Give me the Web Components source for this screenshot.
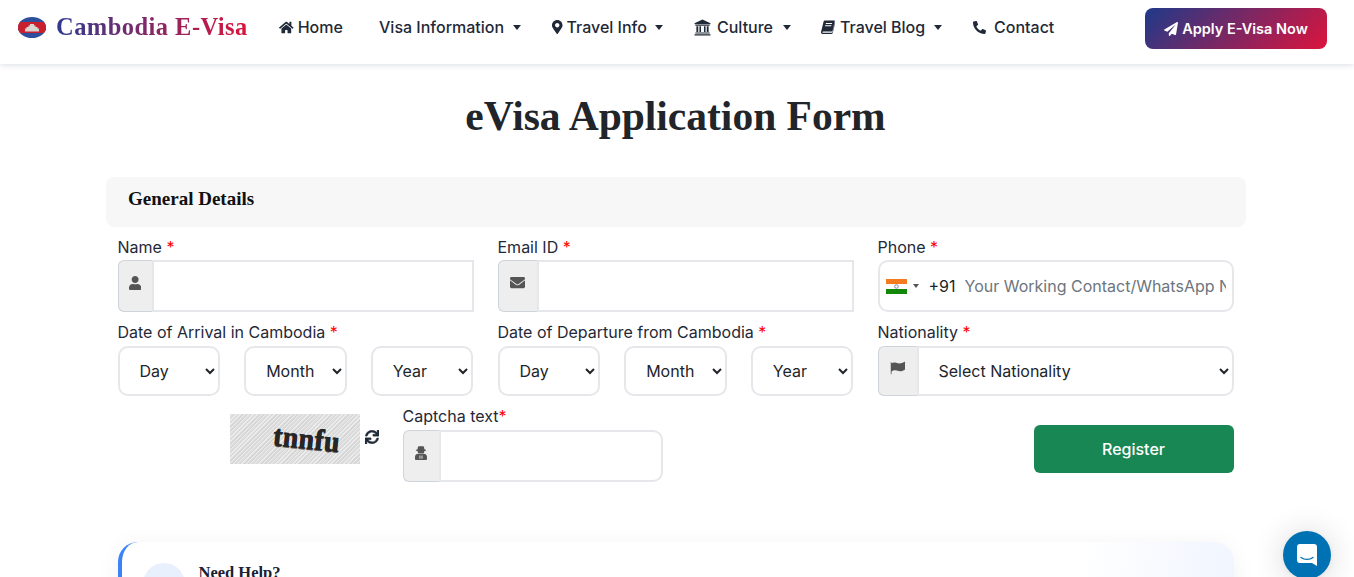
<!DOCTYPE html>
<html lang="en">
<head>
<meta charset="utf-8">
<title>eVisa Application Form</title>
<style>
  html, body { margin: 0; height: 577px; overflow: hidden; background: #fff; }
  body { font-family: Inter, "Liberation Sans", sans-serif; font-size: 16px; color: #212529; }
</style>
</head>
<body>
<site-header></site-header>
<visa-form></visa-form>
<chat-launcher></chat-launcher>

<script>
const ICONS = {
  home: ['0 0 576 512', 'M280.37 148.26L96 300.11V464a16 16 0 0 0 16 16l112.06-.29a16 16 0 0 0 15.92-16V368a16 16 0 0 1 16-16h64a16 16 0 0 1 16 16v95.64a16 16 0 0 0 16 16.05L464 480a16 16 0 0 0 16-16V300L295.67 148.26a12.19 12.19 0 0 0-15.3 0zM571.6 251.47L488 182.56V44.05a12 12 0 0 0-12-12h-56a12 12 0 0 0-12 12v72.61L318.47 43a48 48 0 0 0-61 0L4.34 251.47a12 12 0 0 0-1.6 16.9l25.5 31A12 12 0 0 0 45.15 301l235.22-193.74a12.19 12.19 0 0 1 15.3 0L530.9 301a12 12 0 0 0 16.9-1.6l25.5-31a12 12 0 0 0-1.7-16.93z'],
  pin: ['0 0 384 512', 'M172.268 501.67C26.97 291.031 0 268.413 0 192 0 85.961 85.961 0 192 0s192 85.961 192 192c0 76.413-26.97 99.031-172.268 309.67-9.535 13.774-29.93 13.773-39.464 0zM192 272c44.183 0 80-35.817 80-80s-35.817-80-80-80-80 35.817-80 80 35.817 80 80 80z'],
  bank: ['0 0 512 512', 'M256 16L16 128v32h480v-32zM40 176v24h432v-24zM72 216v176h56V216zM164 216v176h48V216zM300 216v176h48V216zM384 216v176h56V216zM40 408v32h432v-32zM16 456v40h480v-40z'],
  book: ['0 0 512 512', 'M150 16h340c14 0 22 11 18 25l-84 350c-4 14-16 26-32 26H84c-22 0-30 14-32 24-2 14 8 25 26 25h322c12 0 18-8 21-18l82-336c12 6 12 16 9 28l-80 330c-6 24-24 42-50 42H64C26 512-8 478 2 430c1-6 4-14 6-22L92 62c6-26 30-46 58-46zM186 112c-3 0-6 3-7 6l-6 20c-1 3 1 6 4 6h218c3 0 6-3 7-6l6-20c1-3-1-6-4-6zM160 192c-3 0-6 3-7 6l-6 20c-1 3 1 6 4 6h218c3 0 6-3 7-6l6-20c1-3-1-6-4-6z'],
  phone: ['0 0 512 512', 'M18.6 24.6l104-24c11.3-2.6 22.9 3.3 27.5 13.9l48 112c4.2 9.8 1.4 21.3-6.9 28l-60.6 49.6c36 76.7 98.9 140.5 177.2 177.2l49.6-60.6c6.8-8.3 18.2-11.1 28-6.9l112 48c10.7 4.6 16.6 16.2 14 27.5l-24 104C484.9 504.2 475.3 512 464 512 207.9 512 0 304.5 0 48c0-11.2 7.7-20.9 18.6-23.4z'],
  plane: ['0 0 512 512', 'M476 3.2L12.5 270.6c-18.1 10.4-15.8 35.6 2.2 43.2L121 358.4l287.3-253.2c5.5-4.9 13.3 2.6 8.6 8.3L176 407v80.5c0 23.6 28.5 32.9 42.5 15.8L282 426l124.6 52.2c14.2 6 30.4-2.9 33-18.2l72-432C515 7.8 493.3-6.8 476 3.2z'],
  user: ['0 0 448 512', 'M224 256c70.7 0 128-57.3 128-128S294.7 0 224 0 96 57.3 96 128s57.3 128 128 128zm89.6 32h-16.7c-22.2 10.2-46.9 16-72.9 16s-50.6-5.8-72.9-16h-16.7C60.2 288 0 348.2 0 422.4V464c0 26.5 21.5 48 48 48h352c26.5 0 48-21.5 48-48v-41.6c0-74.2-60.2-134.4-134.4-134.4z'],
  mail: ['0 0 512 512', 'M502.3 190.8c3.9-3.1 9.7-.2 9.7 4.7V400c0 26.5-21.5 48-48 48H48c-26.5 0-48-21.5-48-48V195.6c0-5 5.7-7.8 9.7-4.7 22.4 17.4 52.1 39.5 154.1 113.6 21.1 15.4 56.7 47.8 92.2 47.6 35.7.3 72-32.8 92.3-47.6 102-74.1 131.6-96.3 154-113.7zM256 320c23.2.4 56.6-29.2 73.4-41.4 132.7-96.3 142.8-104.7 173.4-128.7 5.8-4.5 9.2-11.5 9.2-18.9v-19c0-26.5-21.5-48-48-48H48C21.5 64 0 85.5 0 112v19c0 7.4 3.4 14.3 9.2 18.9 30.6 23.9 40.7 32.4 173.4 128.7 16.8 12.2 50.2 41.8 73.4 41.4z'],
  flag: ['0 0 560 512', 'M28 40a28 28 0 0 1 28 28v18c50-30 110-40 170-20 70 24 130 40 210 10 30-12 64-32 90-46 10-6 26 2 26 14v250c0 12-6 18-14 24-40 30-90 58-160 58-70 0-120-34-180-34-60 0-110 20-142 38v100H28V68a28 28 0 0 1 0-28z'],
  sync: ['0 0 512 512', 'M440.65 12.57l4 82.77A247.16 247.16 0 0 0 255.83 8C134.73 8 33.91 94.92 12.29 209.82A12 12 0 0 0 24.09 224h49.05a12 12 0 0 0 11.67-9.26 175.91 175.91 0 0 1 317-56.94l-101.46-4.86a12 12 0 0 0-12.57 12v47.41a12 12 0 0 0 12 12H500a12 12 0 0 0 12-12V12a12 12 0 0 0-12-12h-47.37a12 12 0 0 0-11.98 12.57zM255.83 432a175.61 175.61 0 0 1-146-77.8l101.8 4.87a12 12 0 0 0 12.57-12v-47.4a12 12 0 0 0-12-12H12a12 12 0 0 0-12 12V500a12 12 0 0 0 12 12h47.35a12 12 0 0 0 12-12.6l-4.15-82.57A247.17 247.17 0 0 0 255.83 504c121.11 0 221.93-86.92 243.55-201.82a12 12 0 0 0-11.8-14.18h-49.05a12 12 0 0 0-11.67 9.26A175.86 175.86 0 0 1 255.83 432z'],
  secret: ['0 0 438 512', 'M219 0c24 0 40 14 56 14 16 0 26-8 38-2 16 8 24 60 30 108 40 8 64 20 64 34 0 16-30 30-72 36 8 30 2 62-18 84h-196c-20-22-26-54-18-84-42-6-72-20-72-36 0-14 24-26 64-34 6-48 14-100 30-108 12-6 22 2 38 2 16 0 32-14 56-14zM62 290h314c36 20 62 62 62 112v70c0 22-18 40-40 40H40c-22 0-40-18-40-40v-70c0-50 26-92 62-112zM166 352v110h32V352zM240 352v110h32V352z']
};

function icon(name, size, fill) {
  const [box, d] = ICONS[name];
  return `<svg viewBox="${box}" height="${size}" fill="${fill || 'currentColor'}" style="display:block;flex:none"><path d="${d}"/></svg>`;
}

class NavItem extends HTMLElement {
  connectedCallback() {
    const name = this.getAttribute('icon');
    const size = this.getAttribute('size') || 16;
    const caret = this.hasAttribute('caret') ? '<span class="caret"></span>' : '';
    this.attachShadow({mode: 'open'}).innerHTML = `
      <style>
        :host { display: flex; align-items: center; color: #1f2937; font-size: 16px; white-space: nowrap; }
        a { display: flex; align-items: center; gap: var(--gap, 5px); color: inherit; text-decoration: none; font-weight: 450; }
        .caret { border-top: 5px solid currentColor; border-left: 4.5px solid transparent; border-right: 4.5px solid transparent; margin-left: 4px; }
      </style>
      <a href="#">${name ? icon(name, size) : ''}<slot></slot>${caret}</a>`;
  }
}
customElements.define('nav-item', NavItem);

class SiteHeader extends HTMLElement {
  constructor() {
    super();
    this.attachShadow({mode: 'open'}).innerHTML = `
      <style>
        :host { display: flex; align-items: center; height: 64px; box-sizing: border-box; padding: 0 27px 10px 18px; background: #fff; box-shadow: 0 1px 6px rgba(30,41,80,.16); position: relative; z-index: 2; }
        .brand { display: flex; align-items: center; gap: 10px; width: 261px; flex: none; }
        .name { font: 700 24.5px "Liberation Serif", serif; letter-spacing: .45px; background: linear-gradient(90deg, #2f3a8f, #dc143c); -webkit-background-clip: text; background-clip: text; color: transparent; }
        nav { display: flex; flex: 1; }
        nav-item:nth-child(1) { width: 100px; }
        nav-item:nth-child(2) { width: 173px; }
        nav-item:nth-child(3) { width: 142px; }
        nav-item:nth-child(4) { width: 127px; }
        nav-item:nth-child(5) { width: 152px; }
        .cta { display: flex; align-items: center; justify-content: center; gap: 4px; width: 182px; height: 41px; margin-top: 3px; border-radius: 8px; color: #fff; font-weight: 600; font-size: 14.5px; text-decoration: none; background: linear-gradient(135deg, #1e3a8a, #dc143c); }
      </style>
      <div class="brand">
        <svg width="28" height="21" viewBox="0 0 28 21">
          <defs><clipPath id="o"><ellipse cx="14" cy="10.5" rx="14" ry="10.5"/></clipPath></defs>
          <g clip-path="url(#o)">
            <rect width="28" height="21" fill="#2e4f9c"/>
            <rect y="5" width="28" height="11" fill="#c8202f"/>
            <path d="M7 14.500v-3h1.500v-1.500h2v-1.500h1.500v-1.500h4v1.500h1.500v1.500h2v1.500h1.500v3z" fill="#d9d5d2"/>
          </g>
        </svg>
        <span class="name">Cambodia E-Visa</span>
      </div>
      <nav>
        <nav-item icon="home" size="13" style="--gap:4px">Home</nav-item>
        <nav-item caret style="--gap:5px">Visa Information</nav-item>
        <nav-item icon="pin" size="14" style="--gap:4px" caret>Travel Info</nav-item>
        <nav-item icon="bank" size="17" style="--gap:6px" caret>Culture</nav-item>
        <nav-item icon="book" size="14" caret>Travel Blog</nav-item>
        <nav-item icon="phone" size="13" style="--gap:8px">Contact</nav-item>
      </nav>
      <a class="cta" href="#">${icon('plane', 14)}Apply E-Visa Now</a>`;
  }
}
customElements.define('site-header', SiteHeader);

class FormField extends HTMLElement {
  constructor() {
    super();
    this.attachShadow({mode: 'open'}).innerHTML = `
      <style>
        :host { display: block; min-width: 0; }
        label { display: block; height: 24px; line-height: 24px; margin-bottom: var(--label-gap, 2px); color: #1f2937; }
        b { color: #f00; font-weight: 400; }
      </style>
      <label><span id="t"></span><b id="s"></b></label>
      <slot></slot>`;
  }
  connectedCallback() {
    this.shadowRoot.getElementById('t').textContent = this.getAttribute('label');
    this.shadowRoot.getElementById('s').textContent = this.hasAttribute('tight') ? '*' : ' *';
  }
}
customElements.define('form-field', FormField);

class IconInput extends HTMLElement {
  connectedCallback() {
    const w = this.getAttribute('addon') || 34;
    const square = this.hasAttribute('square');
    const r = square ? '0' : '10px';
    this.attachShadow({mode: 'open'}).innerHTML = `
      <style>
        :host { display: flex; height: 52px; box-sizing: border-box; }
        .addon { width: ${w}px; flex: none; box-sizing: border-box; background: #eee; border: 1px solid #ced4da; border-right: 0; border-radius: 6px 0 0 6px; display: flex; align-items: center; justify-content: center; color: #555; padding-bottom: 7px; }
        input, select { flex: 1; min-width: 0; box-sizing: border-box; height: 100%; border: 2px solid #e5e7eb; border-radius: 0 ${r} ${r} 0; padding: 0 16px; font: 16px Inter, sans-serif; color: #212529; background: #fff; outline: 0; }
      </style>
      <span class="addon">${icon(this.getAttribute('icon'), +this.getAttribute('icon-size') || 14)}</span>
      <slot></slot>
      ${this.hasAttribute('select')
        ? `<select><option>${this.getAttribute('select')}</option></select>`
        : '<input type="text">'}`;
  }
}
customElements.define('icon-input', IconInput);

class DateSelect extends HTMLElement {
  constructor() {
    super();
    const parts = ['Day', 'Month', 'Year'];
    this.attachShadow({mode: 'open'}).innerHTML = `
      <style>
        :host { display: grid; grid-template-columns: repeat(3, 1fr); gap: 24px; }
        select { width: 100%; height: 50px; box-sizing: border-box; border: 2px solid #e5e7eb; border-radius: 10px; padding: 0 0 0 16px; font: 16px Inter, sans-serif; color: #212529; background: #fff; outline: 0; }
      </style>
      ${parts.map(p => `<select><option>${p}</option></select>`).join('')}`;
  }
}
customElements.define('date-select', DateSelect);

class PhoneInput extends HTMLElement {
  constructor() {
    super();
    this.attachShadow({mode: 'open'}).innerHTML = `
      <style>
        :host { display: flex; align-items: center; height: 52px; box-sizing: border-box; border: 2px solid #e5e7eb; border-radius: 10px; padding: 0 6px; }
        .caret { border-top: 4px solid #555; border-left: 3px solid transparent; border-right: 3px solid transparent; margin: 0 10px 0 6px; }
        .code { color: #212529; margin-right: 9px; }
        input { flex: 1; min-width: 0; border: 0; padding: 0; outline: 0; font: 16px Inter, sans-serif; color: #212529; }
        input::placeholder { color: #6c757d; opacity: 1; }
      </style>
      <svg width="21" height="15" viewBox="0 0 21 15" style="flex:none">
        <rect width="21" height="15" fill="#fff"/>
        <rect width="21" height="5" fill="#f47b20"/>
        <rect y="10" width="21" height="5" fill="#138808"/>
        <circle cx="10.500" cy="7.500" r="1.800" fill="none" stroke="#6a6a9a" stroke-width=".8"/>
      </svg>
      <span class="caret"></span>
      <span class="code">+91</span>
      <input type="text" placeholder="Your Working Contact/WhatsApp Number">`;
  }
}
customElements.define('phone-input', PhoneInput);

class CaptchaBox extends HTMLElement {
  constructor() {
    super();
    this.attachShadow({mode: 'open'}).innerHTML = `
      <style>
        :host { display: flex; align-items: center; gap: 5px; }
        .img { width: 130px; height: 50px; box-sizing: border-box; padding: 10px 0 0 43px; overflow: hidden; background: repeating-linear-gradient(135deg, #d6d6d6 0 1px, #ececec 1px 2px, #dedede 2px 3px); }
        .img span { display: inline-block; font: 700 28px/30px "Liberation Serif", serif; letter-spacing: .3px; color: #262626; text-shadow: .6px 0 0 #262626, 0 1px 0 #555; transform: rotate(6deg) scaleY(1.08); }
        .re { color: #1f2937; margin-bottom: 5px; }
        .re svg { stroke: currentColor; stroke-width: 14px; }
      </style>
      <div class="img"><span>tnnfu</span></div>
      <span class="re">${icon('sync', 14)}</span>`;
  }
}
customElements.define('captcha-box', CaptchaBox);

class HelpCard extends HTMLElement {
  constructor() {
    super();
    this.attachShadow({mode: 'open'}).innerHTML = `
      <style>
        :host { display: flex; gap: 14px; box-sizing: border-box; height: 110px; padding: 21px 21px; border-radius: 20px; border-left: 4px solid #3b82f6; background: linear-gradient(100deg, #fff 85%, #eff4ff 100%); box-shadow: 0 4px 24px rgba(0,0,0,.06); }
        .dot { width: 42px; height: 42px; border-radius: 50%; background: #e8f0fe; flex: none; }
        h3 { margin: 0; font: 700 16.500px/19px "Liberation Serif", serif; color: #1a2035; }
      </style>
      <span class="dot"></span>
      <div><h3><slot></slot></h3></div>`;
  }
}
customElements.define('help-card', HelpCard);

class ChatLauncher extends HTMLElement {
  constructor() {
    super();
    this.attachShadow({mode: 'open'}).innerHTML = `
      <style>
        :host { position: fixed; left: 1283px; top: 531px; width: 48px; height: 48px; border-radius: 50%; background: #0071b2; box-shadow: 0 1px 6px rgba(0,0,0,.06), 0 2px 32px rgba(0,0,0,.16); display: flex; align-items: center; justify-content: center; z-index: 5; }
      </style>
      <svg width="22" height="24" viewBox="0 0 22 24">
        <path d="M4 1h14a3 3 0 0 1 3 3v19l-5-3H4a3 3 0 0 1-3-3V4a3 3 0 0 1 3-3z" fill="#fff"/>
        <path d="M5 14.500c3.500 2.400 8.500 2.400 12 0" fill="none" stroke="#0071b2" stroke-width="1.400" stroke-linecap="round"/>
      </svg>`;
  }
}
customElements.define('chat-launcher', ChatLauncher);

class VisaForm extends HTMLElement {
  constructor() {
    super();
    this.attachShadow({mode: 'open'}).innerHTML = `
      <style>
        :host { display: block; width: 1140px; margin: 0 0 0 105.5px; }
        h1 { margin: 0; padding-top: 28px; text-align: center; font: 700 41.500px/48px "Liberation Serif", serif; color: #212529; }
        .head { margin-top: 37px; height: 50px; box-sizing: border-box; padding: 0 22.500px; display: flex; align-items: center; background: #f7f7f7; border-radius: 8px; font: 700 19px "Liberation Serif", serif; color: #111; padding-bottom: 7px; }
        .body { padding: 8px 12px 0; }
        .row { display: grid; grid-template-columns: repeat(3, 1fr); gap: 24px; margin-bottom: 8px; }
        .first { --label-gap: 1px; }
        .row3 { display: flex; align-items: flex-start; height: 78px; }
        captcha-box { margin: 10px 0 0 112px; width: 173px; flex: none; }
        .cap { width: 260.500px; flex: none; }
        .reg { margin: 21px 0 0 auto; width: 200px; height: 48px; border: 0; border-radius: 6px; background: #198754; color: #fff; font: 500 16px Inter, sans-serif; }
        help-card { margin-top: 60px; }
      </style>
      <h1>eVisa Application Form</h1>
      <div class="head">General Details</div>
      <div class="body">
        <div class="row first">
          <form-field label="Name"><icon-input icon="user" square></icon-input></form-field>
          <form-field label="Email ID"><icon-input icon="mail" addon="39" icon-size="15" square></icon-input></form-field>
          <form-field label="Phone"><phone-input></phone-input></form-field>
        </div>
        <div class="row">
          <form-field label="Date of Arrival in Cambodia"><date-select></date-select></form-field>
          <form-field label="Date of Departure from Cambodia"><date-select></date-select></form-field>
          <form-field label="Nationality"><icon-input icon="flag" addon="39" icon-size="14" select="Select Nationality" style="height:50px"></icon-input></form-field>
        </div>
        <div class="row3">
          <captcha-box></captcha-box>
          <form-field class="cap" label="Captcha text" tight><icon-input icon="secret" addon="36" icon-size="14"></icon-input></form-field>
          <button class="reg" type="button">Register</button>
        </div>
        <help-card>Need Help?</help-card>
      </div>`;
  }
}
customElements.define('visa-form', VisaForm);
</script>
</body>
</html>
